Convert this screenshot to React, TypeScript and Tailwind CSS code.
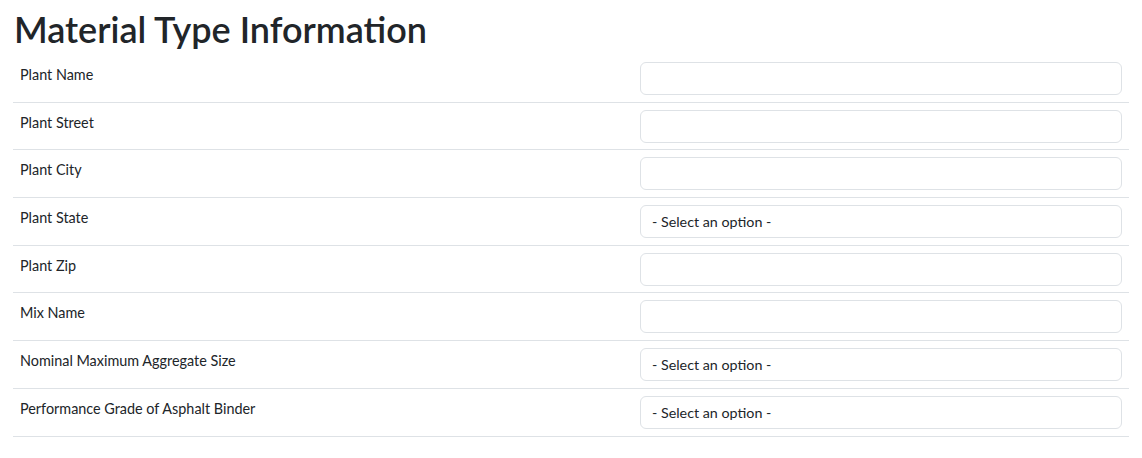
const rows = [
  { label: "Plant Name", type: "input" },
  { label: "Plant Street", type: "input" },
  { label: "Plant City", type: "input" },
  { label: "Plant State", type: "select" },
  { label: "Plant Zip", type: "input" },
  { label: "Mix Name", type: "input" },
  { label: "Nominal Maximum Aggregate Size", type: "select" },
  { label: "Performance Grade of Asphalt Binder", type: "select" },
];

export default function App() {
  return (
    <div
      className="min-h-screen bg-white px-[13px] text-[#212529]"
      style={{ fontFamily: 'Lato, "Noto Sans", sans-serif' }}
    >
      <h1 className="mb-[7px] h-[48px] pl-px pt-[5px] text-[36px] font-semibold leading-[48px]">
        Material Type Information
      </h1>
      <div className="w-[1116px]">
        {rows.map((row) => (
          <div key={row.label} className="flex h-[47.7px] border-b border-[#dee2e6]">
            <div className="w-[621px] px-[7px] pt-[9px] text-[14.4px] leading-[21px]">{row.label}</div>
            <div className="flex-1 px-[6px] pt-[7px]">
              {row.type === "select" ? (
                <div className="flex h-[33px] w-[482px] items-center rounded-[6px] border border-[#dee2e6] px-[11px] text-[14.3px]">
                  - Select an option -
                </div>
              ) : (
                <input
                  type="text"
                  className="block h-[33px] w-[482px] rounded-[6px] border border-[#dee2e6] px-[11px] text-[14.3px] outline-none"
                />
              )}
            </div>
          </div>
        ))}
      </div>
    </div>
  );
}
